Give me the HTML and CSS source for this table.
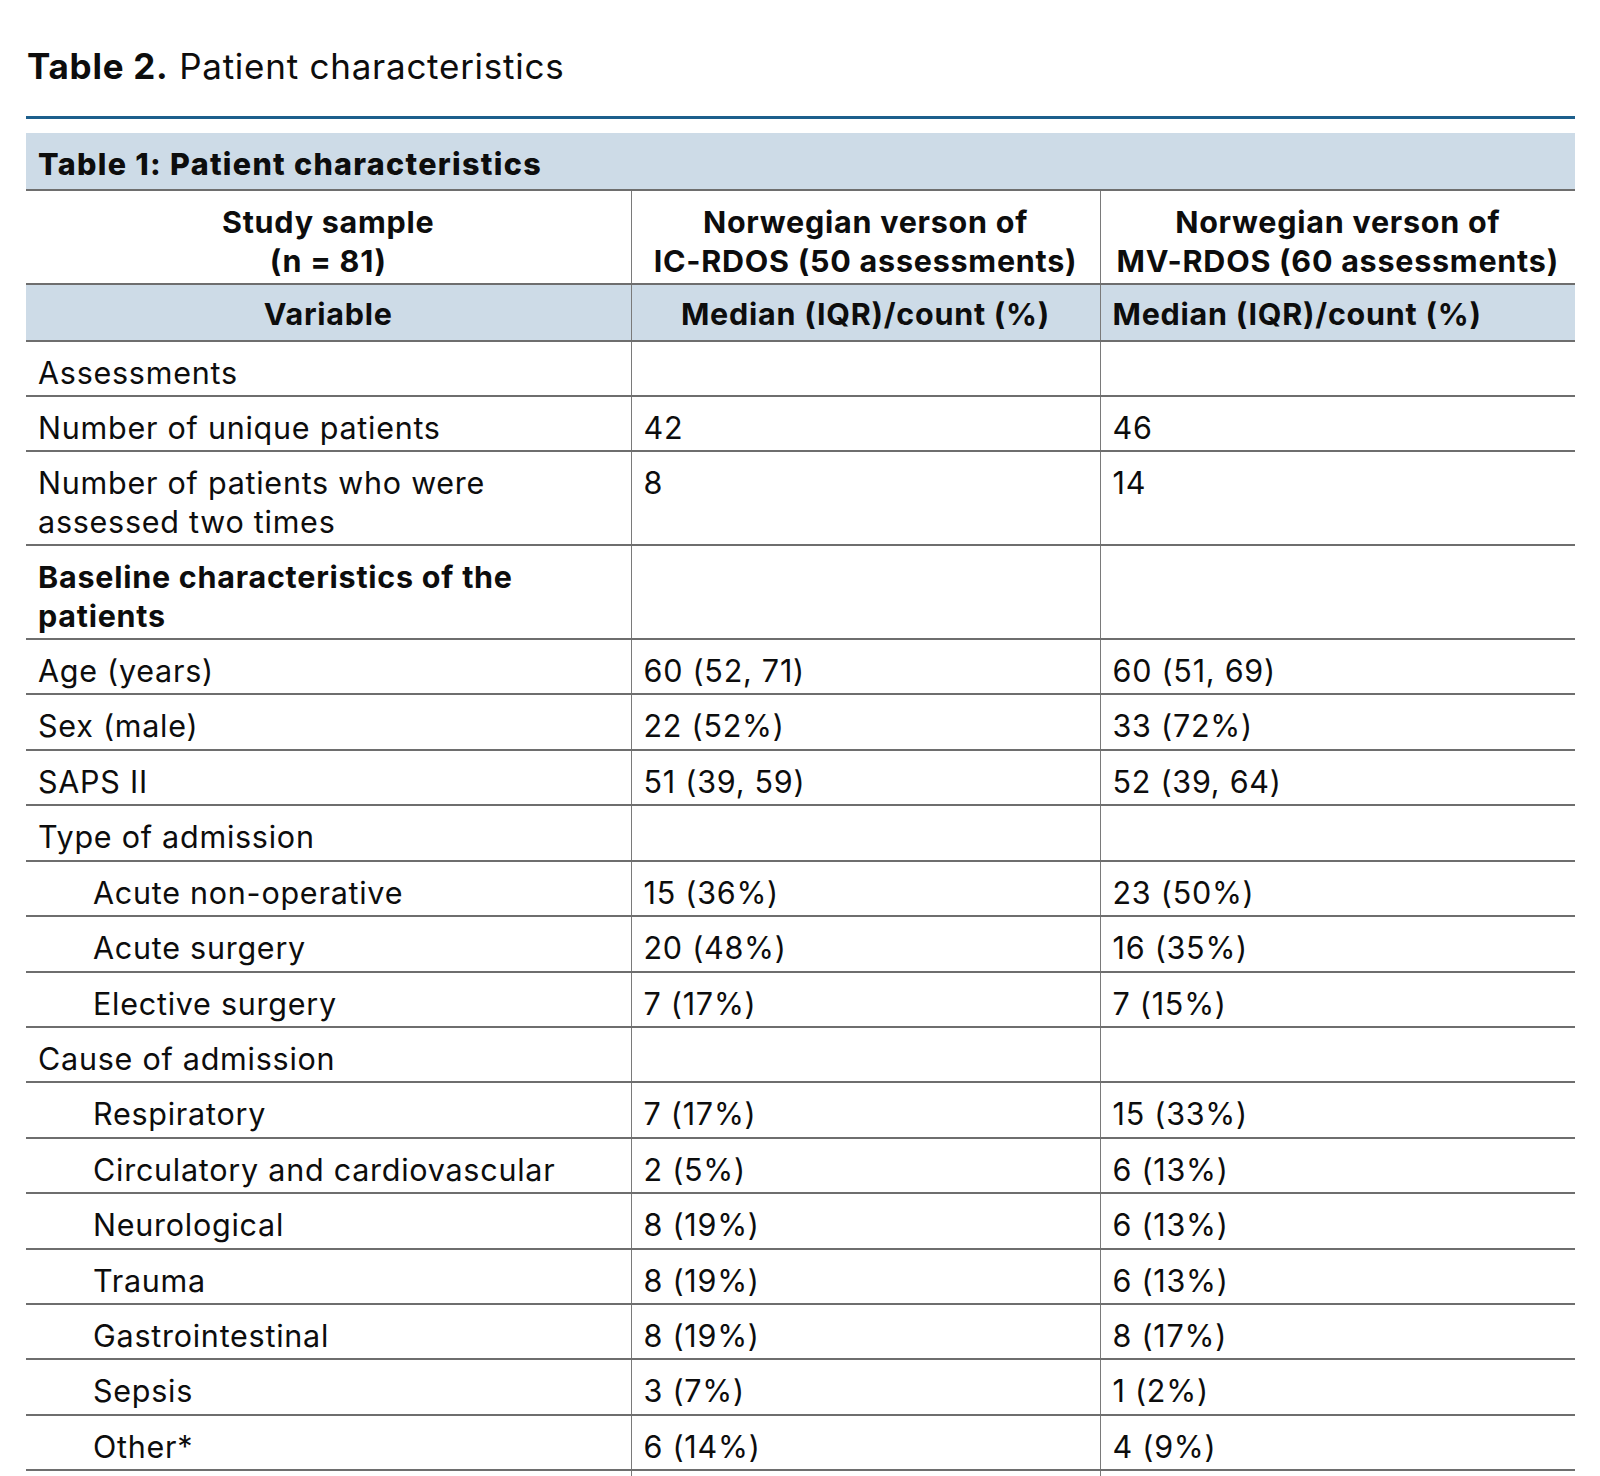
FILE: index.html
```html
<!DOCTYPE html>
<html lang="en">
<head>
<meta charset="utf-8">
<title>Table 2. Patient characteristics</title>
<link rel="stylesheet" href="styles.css">
</head>
<body>
<div class="figure">
  <h2 class="caption"><span class="caption-label">Table 2.</span> Patient characteristics</h2>
  <div class="rule"></div>
  <table class="data">
    <colgroup>
      <col class="c1">
      <col class="c2">
      <col class="c3">
    </colgroup>
    <thead>
      <tr class="title-row"><th colspan="3" class="table-title">Table 1: Patient characteristics</th></tr>
      <tr class="head-row">
        <th class="center">Study sample<br>(n = 81)</th>
        <th class="center">Norwegian verson of<br>IC-RDOS (50 assessments)</th>
        <th class="center">Norwegian verson of<br>MV-RDOS (60 assessments)</th>
      </tr>
      <tr class="sub-row">
        <th class="center">Variable</th>
        <th class="center">Median (IQR)/count (%)</th>
        <th class="left">Median (IQR)/count (%)</th>
      </tr>
    </thead>
    <tbody>
      <tr><td>Assessments</td><td></td><td></td></tr>
      <tr><td>Number of unique patients</td><td>42</td><td>46</td></tr>
      <tr><td>Number of patients who were<br>assessed two times</td><td>8</td><td>14</td></tr>
      <tr><td class="strong">Baseline characteristics of the<br>patients</td><td></td><td></td></tr>
      <tr><td>Age (years)</td><td>60 (52, 71)</td><td>60 (51, 69)</td></tr>
      <tr><td>Sex (male)</td><td>22 (52%)</td><td>33 (72%)</td></tr>
      <tr><td>SAPS II</td><td>51 (39, 59)</td><td>52 (39, 64)</td></tr>
      <tr><td>Type of admission</td><td></td><td></td></tr>
      <tr><td class="indent">Acute non-operative</td><td>15 (36%)</td><td>23 (50%)</td></tr>
      <tr><td class="indent">Acute surgery</td><td>20 (48%)</td><td>16 (35%)</td></tr>
      <tr><td class="indent">Elective surgery</td><td>7 (17%)</td><td>7 (15%)</td></tr>
      <tr><td>Cause of admission</td><td></td><td></td></tr>
      <tr><td class="indent">Respiratory</td><td>7 (17%)</td><td>15 (33%)</td></tr>
      <tr><td class="indent">Circulatory and cardiovascular</td><td>2 (5%)</td><td>6 (13%)</td></tr>
      <tr><td class="indent">Neurological</td><td>8 (19%)</td><td>6 (13%)</td></tr>
      <tr><td class="indent">Trauma</td><td>8 (19%)</td><td>6 (13%)</td></tr>
      <tr><td class="indent">Gastrointestinal</td><td>8 (19%)</td><td>8 (17%)</td></tr>
      <tr><td class="indent">Sepsis</td><td>3 (7%)</td><td>1 (2%)</td></tr>
      <tr><td class="indent">Other*</td><td>6 (14%)</td><td>4 (9%)</td></tr>
      <tr><td></td><td></td><td></td></tr>
    </tbody>
  </table>
</div>
</body>
</html>
```

FILE: styles.css
```css
html, body {
  margin: 0;
  padding: 0;
  background: #ffffff;
}

body {
  font-family: Inter, "Noto Sans", "Liberation Sans", sans-serif;
  color: #0d0d0d;
}

.figure {
  padding: 0 25px 0 26px;
}

.caption {
  margin: 0;
  padding-top: 42px;
  padding-left: 1px;
  font-size: 35px;
  line-height: 48px;
  font-weight: 400;
  letter-spacing: 0.75px;
}

.caption-label {
  font-weight: 700;
}

.rule {
  margin-top: 26px;
  height: 3px;
  background: #1d5f8c;
}

.data {
  margin-top: 14px;
  width: 100%;
  border-collapse: collapse;
  table-layout: fixed;
  font-size: 30.5px;
  letter-spacing: 0.75px;
}

.c1 { width: 605px; }
.c2 { width: 469px; }
.c3 { width: 475px; }

.data th,
.data td {
  padding: 12px 12px 3px 12px;
  line-height: 38.4px;
  vertical-align: top;
  text-align: left;
  border-bottom: 2px solid #6e6e6e;
  border-left: 1px solid #7a7a7a;
}

.data th:first-child,
.data td:first-child {
  border-left: none;
}

.data th {
  font-weight: 700;
}

.data .title-row th.table-title {
  background: #cddbe7;
  padding: 12px 12px 6px 12px;
  font-weight: 800;
  letter-spacing: 1.3px;
}

.data .sub-row th {
  background: #cddbe7;
  padding-top: 10px;
  padding-bottom: 6px;
}

.data th.center { text-align: center; }
.data th.left { text-align: left; }

.data td.indent {
  padding-left: 67px;
}

.data td.strong {
  font-weight: 650;
}
```
